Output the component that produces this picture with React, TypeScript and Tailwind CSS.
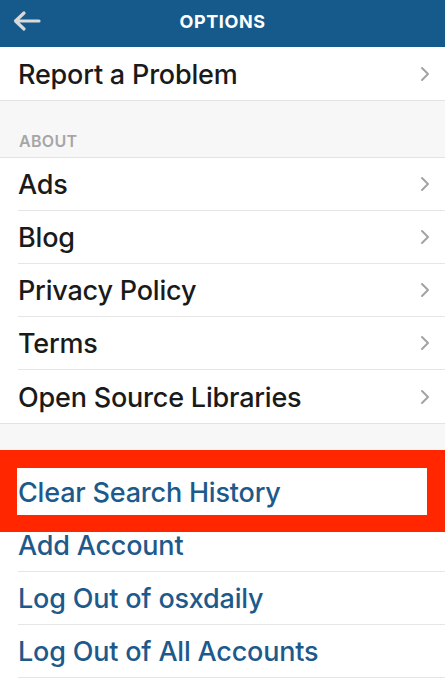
const Chevron = () => (
  <svg width="10" height="16" viewBox="0 0 10 16" fill="none" className="shrink-0">
    <path d="M2 2l6 6-6 6" stroke="#a3a3a3" strokeWidth="2" strokeLinecap="round" strokeLinejoin="round" />
  </svg>
);

const Row = ({ label, chevron = true, blue = false, divider = true }: { label: string; chevron?: boolean; blue?: boolean; divider?: boolean }) => (
  <div className="bg-white pl-[18px]">
    <div className={`h-[53px] flex items-center justify-between pr-[15px] ${divider ? "border-b border-[#e6e6e6]" : ""}`}>
      <span className={`pt-[3px] text-[27px] font-medium tracking-[-0.2px] ${blue ? "text-[#1d5a8b]" : "text-[#1a1a1a]"}`}>{label}</span>
      {chevron && <Chevron />}
    </div>
  </div>
);

export default function App() {
  return (
    <div className="relative w-[445px] h-[680px] overflow-hidden bg-white" style={{ fontFamily: "Inter, 'Open Sans', sans-serif" }}>
      <header className="h-[47px] bg-[#155a8b] flex items-center justify-center relative pb-[5px]">
        <svg width="30" height="22" viewBox="0 0 30 22" fill="none" className="absolute left-[12px] top-[10px]">
          <path d="M27 11H4M12 3L3.5 11 12 19" stroke="#d9d9d9" strokeWidth="3.2" strokeLinecap="round" strokeLinejoin="round" />
        </svg>
        <span className="text-white text-[18px] font-bold tracking-[0.6px]">OPTIONS</span>
      </header>

      <div className="border-b border-[#e3e3e3]">
        <Row label="Report a Problem" divider={false} />
      </div>

      <div className="h-[57px] bg-[#f7f7f7] flex items-end pl-[19px] pb-[4px] border-b border-[#e3e3e3]">
        <span className="text-[16px] font-semibold text-[#a6a6a6] tracking-[0.3px]">ABOUT</span>
      </div>

      <Row label="Ads" />
      <Row label="Blog" />
      <Row label="Privacy Policy" />
      <Row label="Terms" />
      <div className="border-b border-[#e3e3e3]">
        <Row label="Open Source Libraries" divider={false} />
      </div>

      <div className="h-[42px] bg-[#f7f7f7] border-b border-[#e3e3e3]" />

      <Row label="Clear Search History" chevron={false} blue />
      <Row label="Add Account" chevron={false} blue />
      <Row label="Log Out of osxdaily" chevron={false} blue />
      <Row label="Log Out of All Accounts" chevron={false} blue />

      <div className="absolute left-0 top-[450px] w-[445px] h-[82px] border-[#ff2600] border-t-[18px] border-b-[17px] border-l-[17px] border-r-[18px]" />
    </div>
  );
}
